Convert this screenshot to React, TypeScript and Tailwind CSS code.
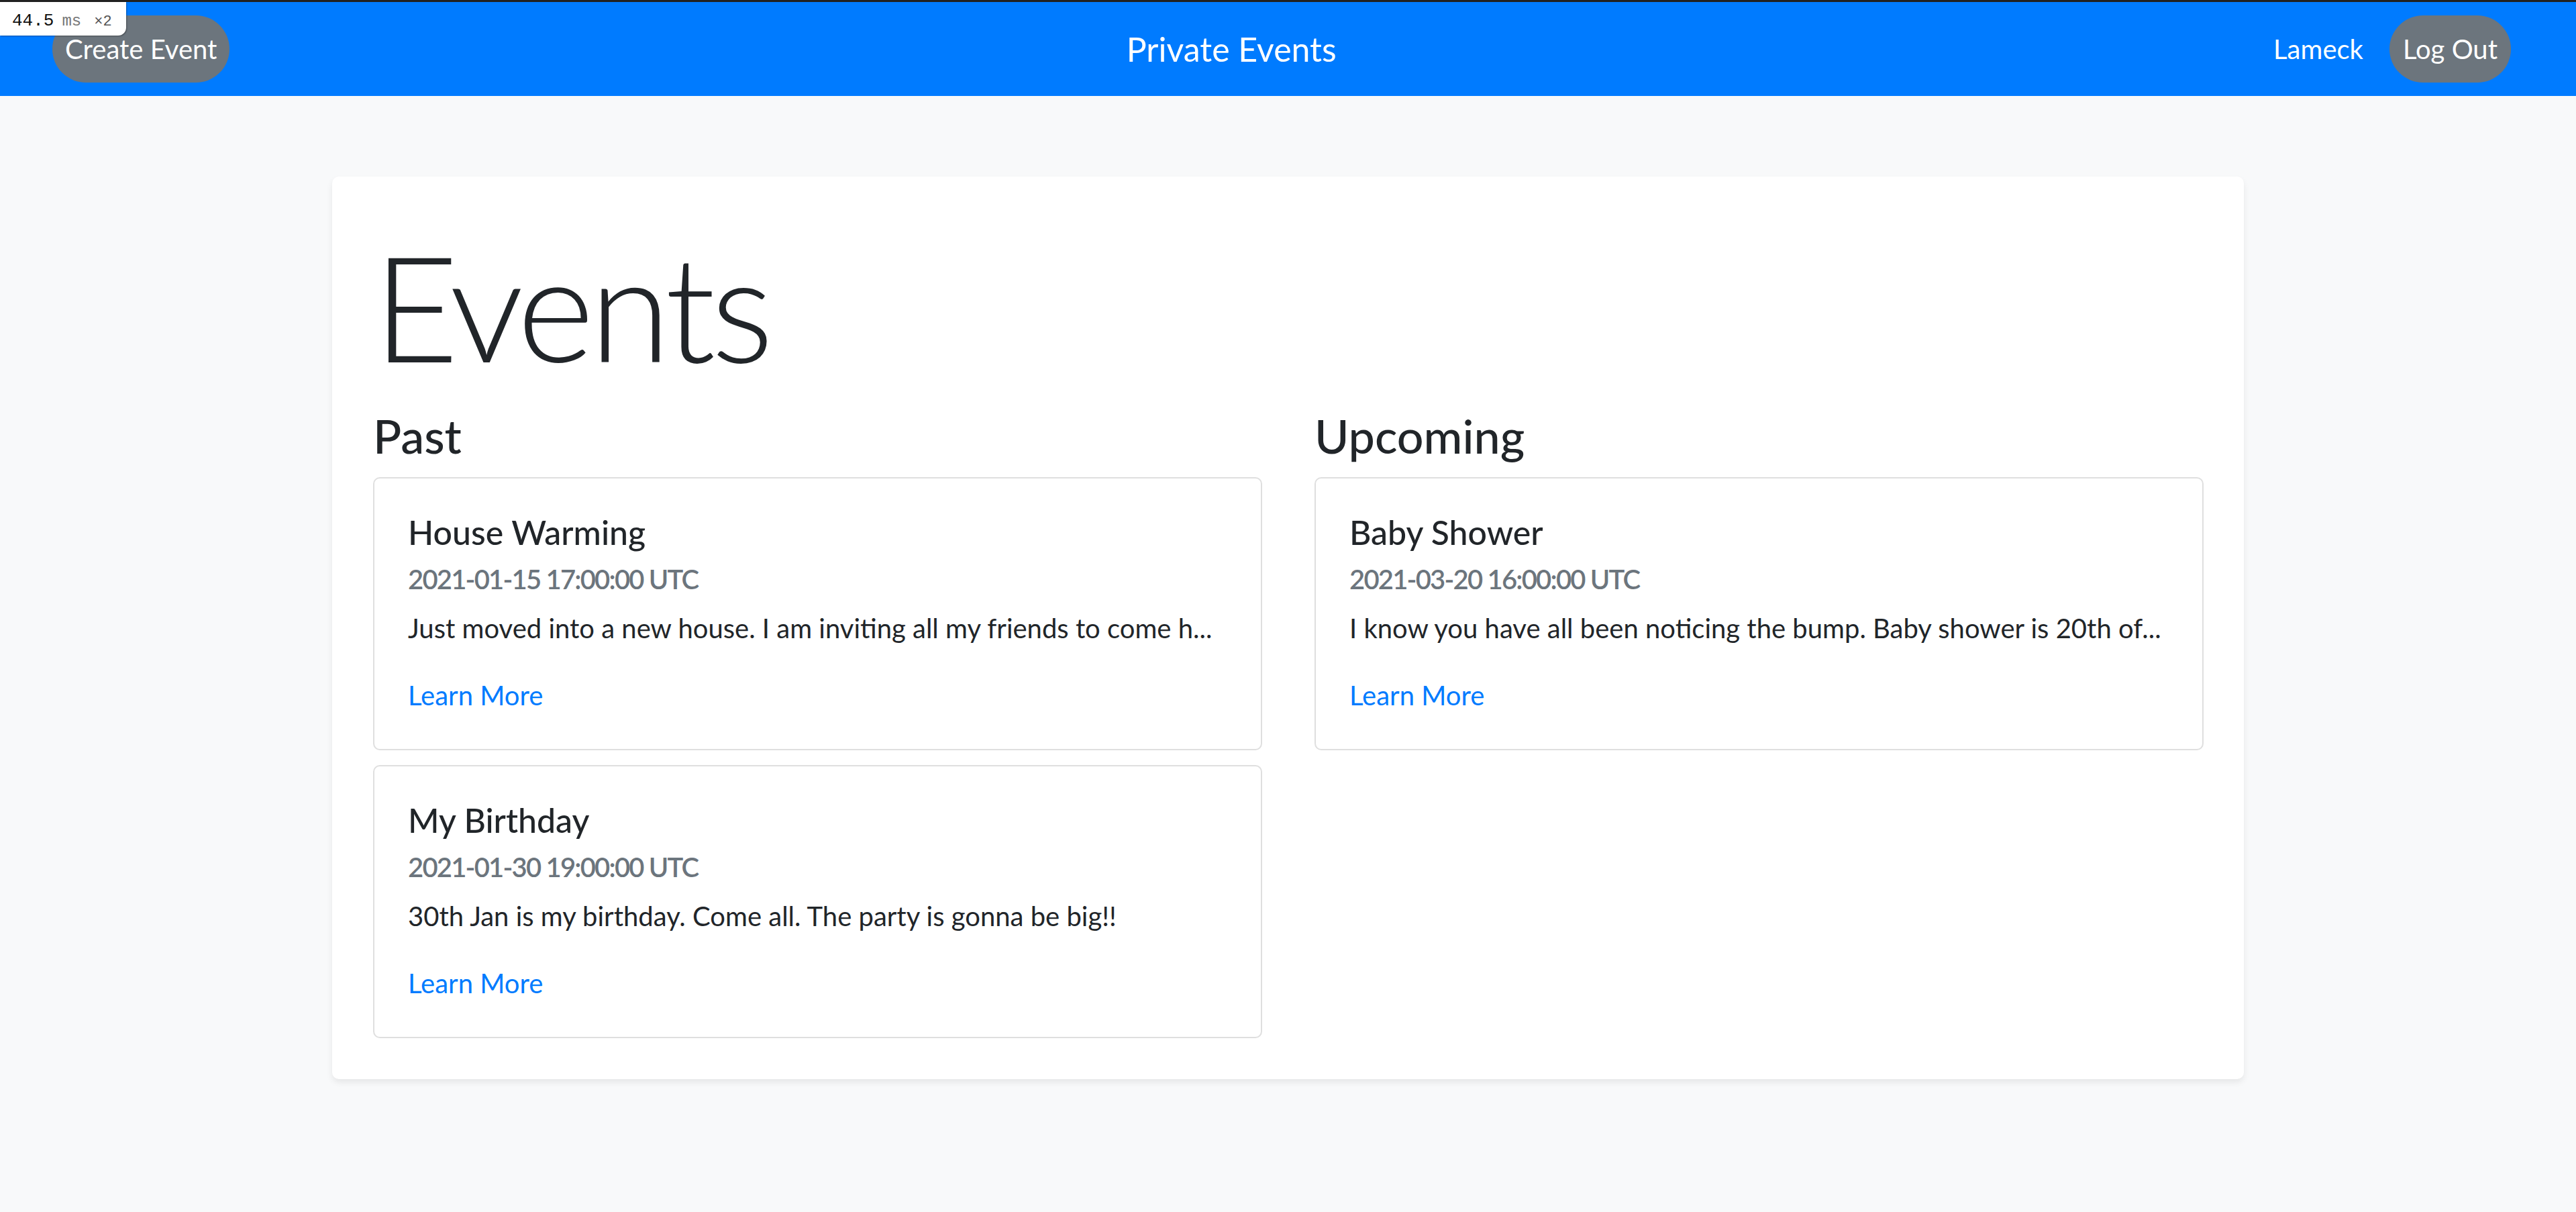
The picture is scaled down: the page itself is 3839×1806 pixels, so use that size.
const events = {
  past: [
    {
      title: "House Warming",
      date: "2021-01-15 17:00:00 UTC",
      body: "Just moved into a new house. I am inviting all my friends to come h...",
    },
    {
      title: "My Birthday",
      date: "2021-01-30 19:00:00 UTC",
      body: "30th Jan is my birthday. Come all. The party is gonna be big!!",
    },
  ],
  upcoming: [
    {
      title: "Baby Shower",
      date: "2021-03-20 16:00:00 UTC",
      body: "I know you have all been noticing the bump. Baby shower is 20th of...",
    },
  ],
};

type EventItem = { title: string; date: string; body: string };

function EventCard({ event }: { event: EventItem }) {
  return (
    <div className="rounded-[10px] border-2 border-[#dfdfdf] bg-white p-[50px]">
      <h5 className="mb-[16px] text-[50px] font-medium leading-[1.2] text-[#212529]">{event.title}</h5>
      <h6 className="mb-[19px] text-[40px] font-semibold leading-[1.2] tracking-[-1.8px] text-[#6c757d]">
        {event.date}
      </h6>
      <p className="mb-[40px] whitespace-nowrap text-[40px] leading-[1.5] text-[#212529]">{event.body}</p>
      <a href="#" className="text-[40px] leading-[1.5] text-[#007bff]">
        Learn More
      </a>
    </div>
  );
}

function Column({ title, items }: { title: string; items: EventItem[] }) {
  return (
    <div>
      <h3 className="mb-[20px] text-[70px] font-medium leading-[1.2] text-[#212529]">{title}</h3>
      <div className="flex flex-col gap-[22px]">
        {items.map((event) => (
          <EventCard key={event.title} event={event} />
        ))}
      </div>
    </div>
  );
}

export default function App() {
  return (
    <div className="relative h-screen overflow-hidden bg-[#f8f9fa] font-[family-name:Lato,sans-serif]">
      <div className="h-[3px] bg-[#212121]" />
      <nav className="flex h-[140px] items-center justify-between bg-[#007bff] pl-[78px] pr-[97px] text-white">
        <button className="h-[100px] rounded-full bg-[#6c757d] px-[19px] text-[40px]">Create Event</button>
        <a href="#" className="mr-[60px] text-[50px] leading-[1.2]">
          Private Events
        </a>
        <div className="flex items-center gap-[39px]">
          <span className="text-[40px]">Lameck</span>
          <button className="h-[100px] rounded-full bg-[#6c757d] px-[20px] text-[40px]">Log Out</button>
        </div>
      </nav>

      <main className="pt-[120px]">
        <div className="mx-auto w-[2849px] rounded-[10px] bg-white pb-[61px] pl-[61px] pr-[60px] pt-[60px] shadow-[0_5px_10px_rgba(0,0,0,0.075)]">
          <h1 className="mb-[20px] text-[220px] font-light leading-[1.2] tracking-[-7px] text-[#212529]">Events</h1>
          <div className="grid grid-cols-2 gap-x-[78px]">
            <Column title="Past" items={events.past} />
            <Column title="Upcoming" items={events.upcoming} />
          </div>
        </div>
      </main>

      <div className="absolute left-0 top-[3px] flex h-[50px] w-[188px] items-baseline rounded-br-[12px] bg-white pl-[18px] pt-[9px] font-[family-name:'Liberation_Mono',monospace] shadow-[1px_1px_2px_rgba(0,0,0,0.35)]">
        <span className="text-[26px] text-[#111]">44.5</span>
        <span className="ml-[12px] text-[24px] text-[#777]">ms</span>
        <span className="ml-[19px] text-[22px] text-[#555]">×2</span>
      </div>
    </div>
  );
}
